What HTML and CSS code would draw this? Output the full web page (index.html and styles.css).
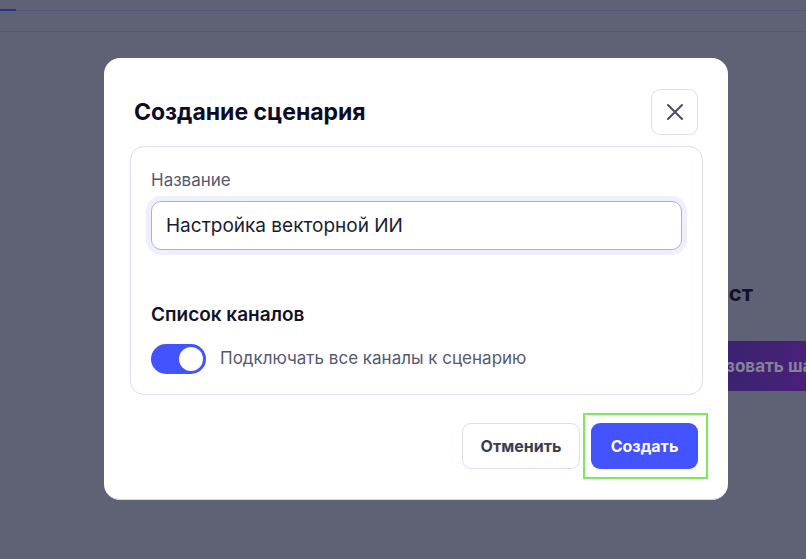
FILE: index.html
```html
<!DOCTYPE html>
<html lang="ru">
<head>
<meta charset="utf-8">
<title>Создание сценария</title>
<link rel="stylesheet" href="styles.css">
</head>
<body>
<div class="page">
  <div class="tabs"><span class="tab-active"></span></div>
  <div class="subbar"></div>
  <div class="content">
    <div class="content-head">Лист</div>
    <div class="content-action"><span>Использовать шаблон</span></div>
  </div>
</div>
<div class="overlay">
  <div class="modal" role="dialog">
    <div class="modal-head">
      <h2 class="modal-title">Создание сценария</h2>
      <button class="close-btn" aria-label="Закрыть">
        <svg width="18" height="18" viewBox="0 0 18 18"><path d="M2 2L16 16M16 2L2 16" stroke="#4a4c63" stroke-width="2" stroke-linecap="round"/></svg>
      </button>
    </div>
    <div class="card">
      <label class="field-label">Название</label>
      <div class="input">Настройка векторной ИИ</div>
      <div class="section-title">Список каналов</div>
      <div class="toggle-row">
        <span class="toggle"><span class="knob"></span></span>
        <span class="toggle-label">Подключать все каналы к сценарию</span>
      </div>
    </div>
    <div class="actions">
      <button class="btn btn-secondary">Отменить</button>
      <span class="focus-frame"><button class="btn btn-primary">Создать</button></span>
    </div>
  </div>
</div>
</body>
</html>
```
FILE: styles.css
```css
* { box-sizing: border-box; }
html, body { margin: 0; padding: 0; }
body {
  width: 806px;
  height: 559px;
  overflow: hidden;
  background: #5f6174;
  font-family: Inter, "Noto Sans", sans-serif;
  position: relative;
}
.page { width: 806px; height: 559px; overflow: hidden; }
.tabs {
  height: 11px;
  border-bottom: 1px solid #54577a;
  position: relative;
}
.tab-active {
  position: absolute;
  left: 0;
  bottom: -1px;
  width: 16px;
  height: 2px;
  background: #2a3190;
}
.subbar {
  height: 21px;
  border-bottom: 1px solid #54577a;
}
.content {
  display: flex;
  flex-direction: column;
  align-items: flex-end;
  padding-top: 248px;
}
.content-head {
  font-size: 22px;
  font-weight: 700;
  color: #10112a;
  padding-right: 53px;
  line-height: 26px;
}
.content-action {
  margin-top: 35px;
  width: 78px;
  height: 50px;
  background: linear-gradient(90deg, #3a2370, #4a2079);
  display: flex;
  align-items: center;
  overflow: hidden;
}
.content-action span {
  white-space: nowrap;
  font-size: 17px;
  font-weight: 700;
  color: #85829c;
  margin-left: -66px;
}
.overlay {
  position: absolute;
  inset: 0;
}
.modal {
  position: absolute;
  left: 104px;
  top: 58px;
  width: 624px;
  height: 442px;
  background: #fff;
  border-radius: 16px;
  border-bottom: 1px solid #d6d7f3;
  padding: 31px 25px 0 26px;
  display: flex;
  flex-direction: column;
}
.modal-head {
  display: flex;
  align-items: center;
  justify-content: space-between;
  padding-left: 4px;
  padding-right: 5px;
  height: 46px;
}
.modal-title {
  margin: 0;
  font-size: 23px;
  font-weight: 700;
  color: #0b0c26;
}
.close-btn {
  width: 47px;
  height: 46px;
  border: 1px solid #dcdcf6;
  border-radius: 9px;
  background: #fff;
  display: flex;
  align-items: center;
  justify-content: center;
  padding: 0;
}
.card {
  margin-top: 11px;
  border: 1px solid #dcdcf6;
  border-radius: 14px;
  padding: 23px 20px 20px 20px;
  height: 249px;
}
.field-label {
  display: block;
  font-size: 17px;
  line-height: 20px;
  color: #565872;
}
.input {
  margin-top: 11px;
  height: 49px;
  border: 1px solid #a9acf5;
  border-radius: 10px;
  box-shadow: 0 0 0 5px #eff0fd;
  padding: 0 14px;
  display: flex;
  align-items: center;
  font-size: 19px;
  color: #1b1c33;
}
.section-title {
  margin-top: 53px;
  font-size: 19px;
  line-height: 24px;
  font-weight: 600;
  color: #11122a;
}
.toggle-row {
  margin-top: 17px;
  display: flex;
  align-items: center;
  gap: 14px;
}
.toggle {
  width: 55px;
  height: 30px;
  border-radius: 15px;
  background: #4353fe;
  display: flex;
  align-items: center;
  justify-content: flex-end;
  padding: 3px;
}
.knob {
  width: 24px;
  height: 24px;
  border-radius: 50%;
  background: #fff;
}
.toggle-label {
  font-size: 17px;
  line-height: 20px;
  margin-top: -2px;
  color: #565872;
}
.actions {
  margin-top: 28px;
  display: flex;
  justify-content: flex-end;
  gap: 11px;
  padding-right: 5px;
}
.btn {
  height: 46px;
  border-radius: 9px;
  font-family: Inter, "Noto Sans", sans-serif;
  font-size: 16px;
  font-weight: 700;
  padding: 0;
}
.btn-secondary {
  width: 118px;
  background: #fff;
  border: 1px solid #dcdcf6;
  color: #3b3c52;
}
.focus-frame {
  display: flex;
  border: 2px solid #80e85c;
  padding: 8px 8px 8px 6px;
  margin: -10px -10px -10px -8px;
}
.btn-primary {
  width: 107px;
  background: #4353fe;
  border: none;
  color: #fff;
}
```
